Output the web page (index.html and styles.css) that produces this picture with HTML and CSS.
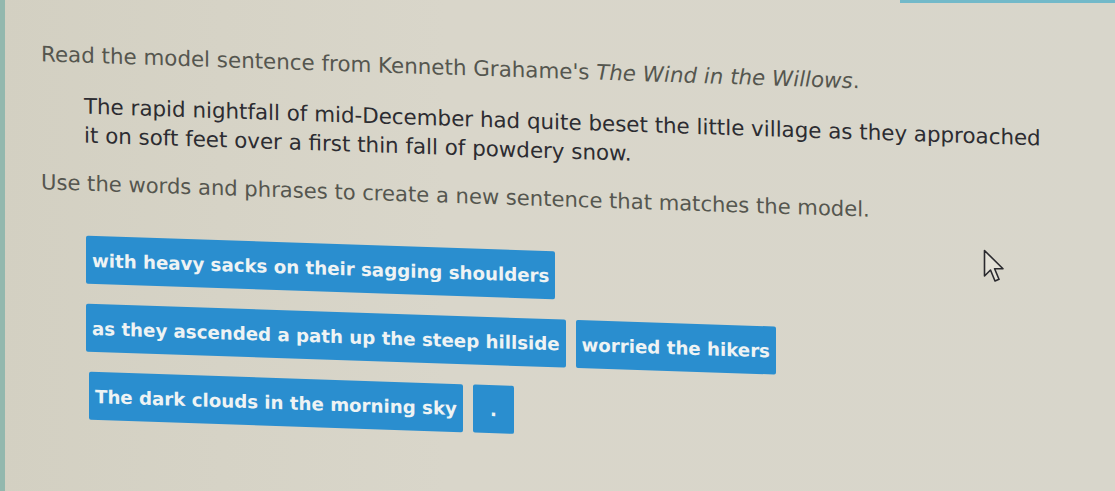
FILE: index.html
```html
<!DOCTYPE html>
<html lang="en">
<head>
<meta charset="utf-8">
<title>Sentence builder</title>
<link rel="stylesheet" href="styles.css">
</head>
<body>
<main class="page">
  <p class="prompt first">Read the model sentence from Kenneth Grahame's <i>The Wind in the Willows</i>.</p>
  <p class="model">The rapid nightfall of mid-December had quite beset the little village as they approached<br>it on soft feet over a first thin fall of powdery snow.</p>
  <p class="prompt">Use the words and phrases to create a new sentence that matches the model.</p>
  <div class="tiles">
    <div class="row"><span class="tile">with heavy sacks on their sagging shoulders</span></div>
    <div class="row"><span class="tile">as they ascended a path up the steep hillside</span><span class="tile">worried the hikers</span></div>
    <div class="row shift"><span class="tile">The dark clouds in the morning sky</span><span class="tile dot">.</span></div>
  </div>
</main>
<svg class="cursor" width="22" height="36" viewBox="0 0 22 36" aria-hidden="true">
  <path d="M1.5 1.5 L1.5 27 L7.5 21 L12 32 L16 30.3 L11.6 19.8 L20 19.8 Z" fill="#e4e2d8" stroke="#2a2a2e" stroke-width="1.6" stroke-linejoin="round"/>
</svg>
</body>
</html>
```
FILE: styles.css
```css
html, body {
  margin: 0;
  padding: 0;
}
body {
  width: 1115px;
  height: 491px;
  overflow: hidden;
  box-sizing: border-box;
  border-left: 5px solid #93b8ae;
  background:
    linear-gradient(to right, rgba(0,0,0,0) 900px, #72b9c9 900px) top left / 100% 3px no-repeat,
    linear-gradient(to right, #d3d0c2 0%, #d9d6ca 40%, #d8d6cb 100%);
  font-family: "DejaVu Sans", Verdana, sans-serif;
  position: relative;
}
.page {
  padding: 41px 0 0 36px;
  transform: skewY(1.9deg);
  transform-origin: 0 0;
}
p {
  margin: 0;
}
.prompt {
  font-size: 21.1px;
  line-height: 24px;
  color: #55564f;
  margin-top: 22px;
}
.prompt.first {
  margin-top: 0;
  font-size: 21.4px;
}
.model {
  margin: 24px 0 0 43px;
  font-size: 21.4px;
  line-height: 29px;
  color: #2c2c31;
}
.tiles {
  margin: 40px 0 0 45px;
  display: flex;
  flex-direction: column;
  gap: 20px;
}
.row {
  display: flex;
  gap: 10px;
}
.row.shift {
  padding-left: 3px;
}
.tile {
  display: block;
  background: #2a8ecf;
  color: #eef3f4;
  font-weight: bold;
  font-size: 18.2px;
  line-height: 49px;
  height: 48px;
  padding: 0 6px;
  border-radius: 2px;
  white-space: nowrap;
}
.tile.dot {
  width: 29px;
  text-align: center;
}
.cursor {
  position: absolute;
  left: 978px;
  top: 249px;
}
```
